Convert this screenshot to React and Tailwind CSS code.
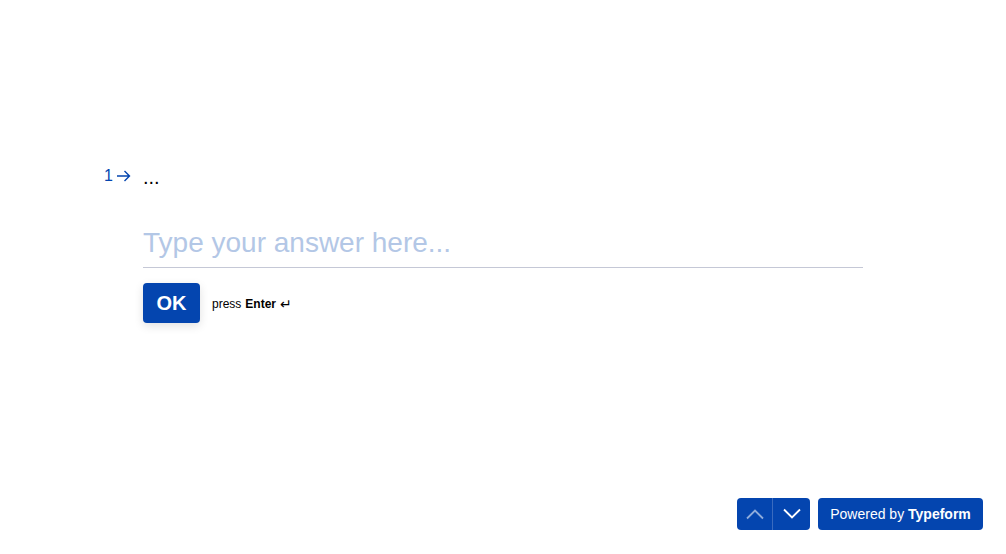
import React from "react";

function ArrowRight() {
    return (
        <svg width="15" height="12" viewBox="0 0 15 12" fill="none" stroke="currentColor" strokeWidth="1.4">
            <path d="M1 6h12.5M8.5 1l5 5-5 5" />
        </svg>
    );
}

function Chevron({ up }) {
    return (
        <svg width="20" height="12" viewBox="0 0 20 12" fill="none" stroke="currentColor" strokeWidth="1.8">
            <path d={up ? "M2 10.5l8-8 8 8" : "M2 1.5l8 8 8-8"} />
        </svg>
    );
}

export default function App() {
    return (
        <main className="w-[1006px] h-[554px] bg-white flex flex-col font-['Liberation_Sans',Arial,sans-serif] text-black">
            <div className="flex-1 pt-[163px] pl-[143px]">
                <div className="w-[720px]">
                    <div className="relative">
                        <div className="absolute left-[-39px] top-[1px] flex items-center gap-[3px] text-[#0445af] text-[16px] leading-6">
                            <span>1</span>
                            <ArrowRight />
                        </div>
                        <p className="text-[20px] leading-7">...</p>
                    </div>

                    <div className="mt-[33px] border-b border-[#c5c8d6] pb-[6px]">
                        <p className="text-[28px] leading-[37px] text-[#b3c7e6]">Type your answer here...</p>
                    </div>

                    <div className="mt-[15px] flex items-center gap-3">
                        <button className="w-[57px] h-[40px] rounded-[4px] bg-[#0445af] text-white font-bold text-[20px] shadow-[0_3px_10px_rgba(0,0,0,0.12)]">
                            OK
                        </button>
                        <span className="text-[12px] flex items-center gap-1 mt-[2px]">
                            press <b>Enter</b> <span className="text-[14px] leading-none">↵</span>
                        </span>
                    </div>
                </div>
            </div>

            <footer className="flex justify-end items-center gap-2 pr-[23px] pb-[24px]">
                <div className="flex h-[32px] rounded-[4px] bg-[#0445af] overflow-hidden">
                    <button className="w-[36px] flex items-center justify-center text-white/55 border-r border-[#3a6bbf]">
                        <Chevron up />
                    </button>
                    <button className="w-[37px] flex items-center justify-center text-white">
                        <Chevron />
                    </button>
                </div>
                <button className="h-[32px] w-[165px] rounded-[4px] bg-[#0445af] text-white text-[14px]">
                    Powered by <b>Typeform</b>
                </button>
            </footer>
        </main>
    );
}
